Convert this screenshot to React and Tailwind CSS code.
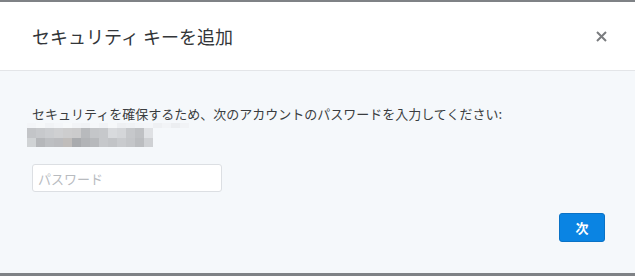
import React, { useState } from 'react';

const topRow = ['#f3f5f8', '#f6f8fa', '#f1f3f6', '#f4f6f9', '#f7f9fb', '#f2f4f7', '#f0f2f5', '#f5f7fa', '#f1f3f6', '#f6f8fa', '#eef0f3', '#f0f2f5', '#f3f5f8', '#f4f6f9', '#eef0f3', '#f2f4f7', '#eceef1', '#f1f3f6'];
const rowA = ['#c3c5c8', '#c7c9cc', '#cbcdd0', '#cfd0d2', '#cdcdce', '#cbcbcc', '#b8babd', '#c4c6c9', '#c6c8cb', '#d8dadd', '#d4d6d9', '#c6c8cb', '#bfc1c4', '#dfe1e4'];
const rowB = ['#d0d3d5', '#b5b7ba', '#bdbfc2', '#bbbcbf', '#c0bdbb', '#a9abae', '#b2b4b7', '#b7b9bc', '#c6c8cb', '#c2c4c7', '#c9cbce', '#c4c6c9', '#bbbdc0', '#cfd1d4'];

function BlurredEmail() {
    return (
        <div className="-ml-[5px] -mt-[1px] flex flex-col">
            <div className="flex h-[5px]">
                {topRow.map((c, i) => (
                    <div key={i} className="w-[9px]" style={{ backgroundColor: c }} />
                ))}
            </div>
            <div className="flex h-[10px]">
                {rowA.map((c, i) => (
                    <div key={i} className="w-[9px]" style={{ backgroundColor: c }} />
                ))}
            </div>
            <div className="flex h-[9px]">
                {rowB.map((c, i) => (
                    <div key={i} className="w-[9px]" style={{ backgroundColor: c }} />
                ))}
            </div>
        </div>
    );
}

export default function App() {
    const [password, setPassword] = useState('');

    return (
        <div
            className="w-[635px] h-[276px] flex flex-col bg-[#f5f8fb] overflow-hidden"
            style={{ fontFamily: '"Noto Sans CJK JP", "Noto Sans", sans-serif' }}
        >
            <div className="h-[2px] bg-[#7f8286] shrink-0" />
            <div className="h-[69px] shrink-0 bg-white border-b border-[#e3e5e8] flex items-center justify-between pl-[32px] pr-[28px]">
                <h1 className="text-[18px] text-[#333639] leading-none">セキュリティ キーを追加</h1>
                <button className="w-[12px] h-[12px] flex items-center justify-center text-[#7a7c7f]">
                    <svg width="11" height="11" viewBox="0 0 11 11" fill="none" stroke="currentColor" strokeWidth="2">
                        <path d="M1 1 L10 10 M10 1 L1 10" />
                    </svg>
                </button>
            </div>
            <div className="flex-1 flex flex-col pl-[32px] pr-[30px] pt-[33px]">
                <p className="text-[13px] leading-[20px] text-[#3a3d40]">
                    セキュリティを確保するため、次のアカウントのパスワードを入力してください:
                </p>
                <BlurredEmail />
                <input
                    type="password"
                    autoFocus
                    value={password}
                    onChange={(e) => setPassword(e.target.value)}
                    placeholder="パスワード"
                    className="mt-[17px] w-[190px] h-[28px] bg-white border border-[#dcdfe3] rounded-[3px] px-[5px] text-[13px] text-[#333] placeholder:text-[#b8bbbf] outline-none caret-[#222]"
                />
                <div className="flex justify-end mt-[21px]">
                    <button className="w-[46px] h-[29px] rounded-[3px] bg-[#0a84e3] border border-[#0a72c6] text-white text-[13px] font-bold">
                        次
                    </button>
                </div>
            </div>
            <div className="h-[3px] bg-[#7f8286] shrink-0" />
        </div>
    );
}
